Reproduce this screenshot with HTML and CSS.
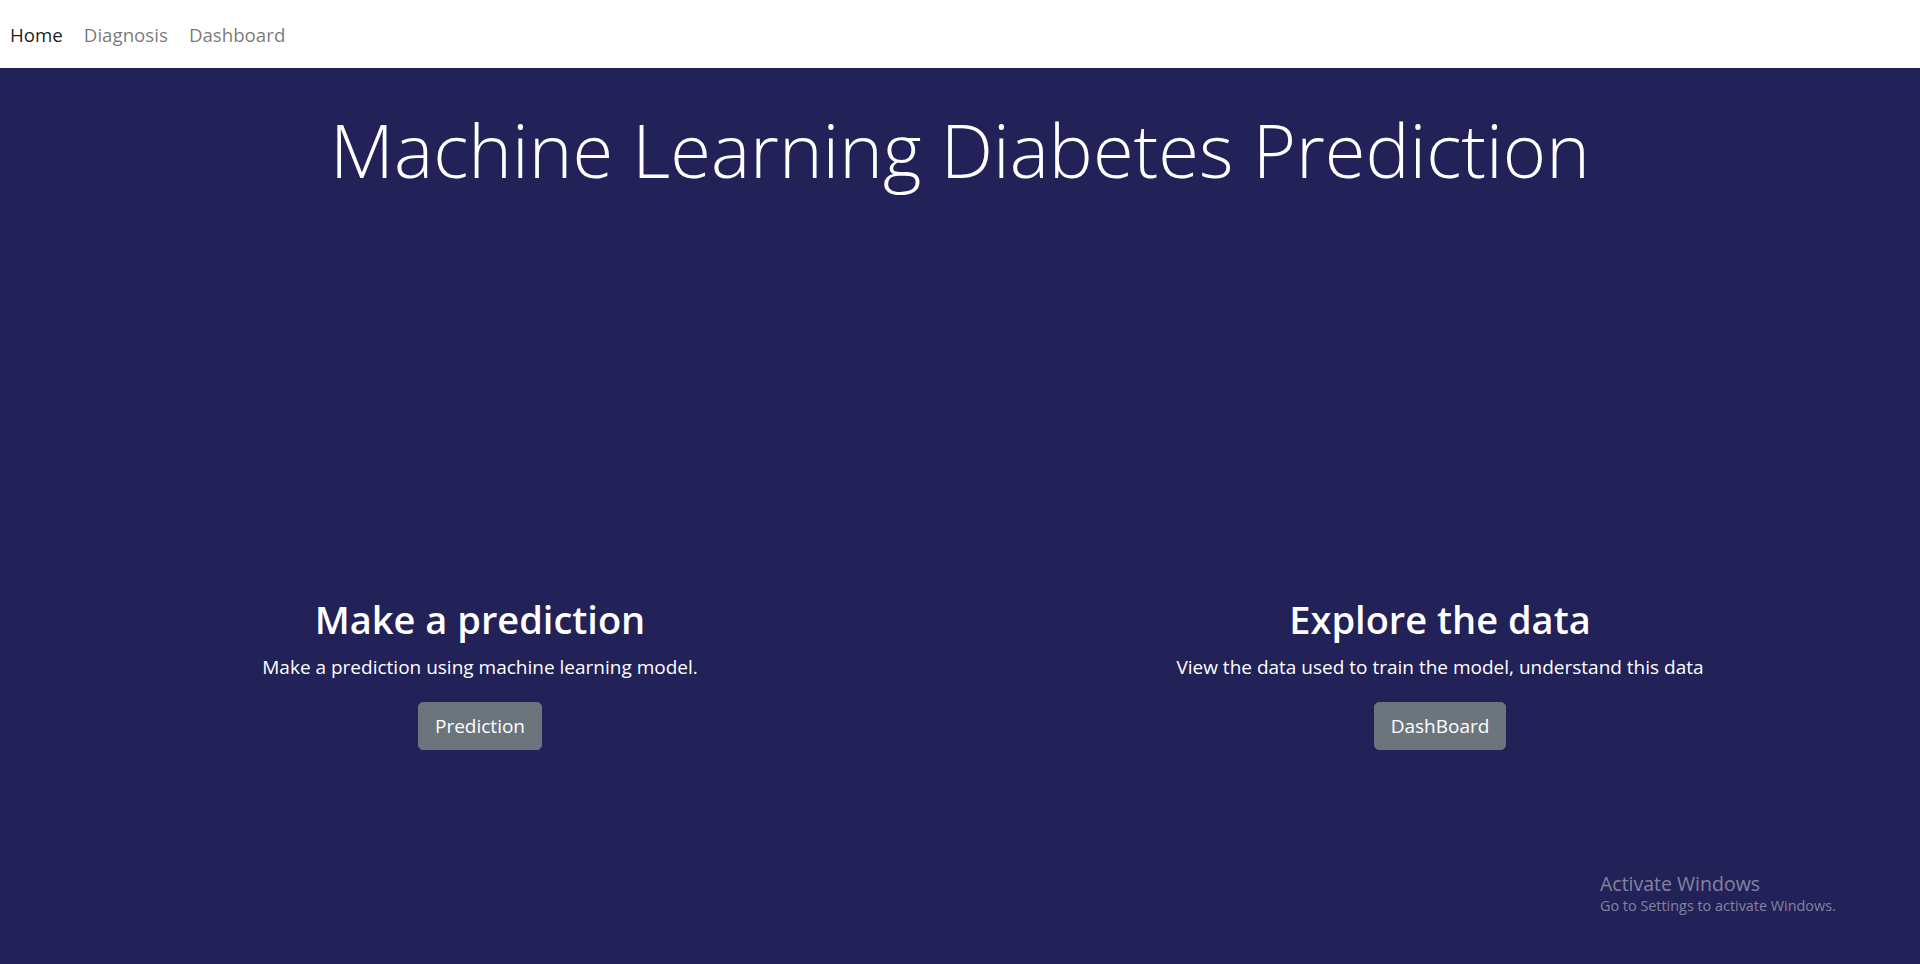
FILE: index.html
```html
<!DOCTYPE html>
<html lang="en">
<head>
<meta charset="utf-8">
<title>Machine Learning Diabetes Prediction</title>
<link rel="stylesheet" href="styles.css">
</head>
<body>
<nav class="navbar">
  <a class="nav-link active" href="#">Home</a>
  <a class="nav-link" href="#">Diagnosis</a>
  <a class="nav-link" href="#">Dashboard</a>
</nav>
<main class="hero">
  <h1 class="display-title">Machine Learning Diabetes Prediction</h1>
  <div class="cards">
    <section class="card">
      <h2 class="card-title">Make a prediction</h2>
      <p class="card-text">Make a prediction using machine learning model.</p>
      <a class="btn" href="#">Prediction</a>
    </section>
    <section class="card">
      <h2 class="card-title">Explore the data</h2>
      <p class="card-text">View the data used to train the model, understand this data</p>
      <a class="btn" href="#">DashBoard</a>
    </section>
  </div>
</main>
<div class="watermark">
  <div class="wm-title">Activate Windows</div>
  <div class="wm-sub">Go to Settings to activate Windows.</div>
</div>
</body>
</html>
```
FILE: styles.css
```css
html, body {
  margin: 0;
  padding: 0;
  height: 100%;
}
body {
  font-family: "Open Sans", "Noto Sans", sans-serif;
  background: #222158;
  color: #fff;
  overflow: hidden;
}
.navbar {
  height: 68px;
  background: #fff;
  display: flex;
  align-items: center;
  padding-left: 10px;
  gap: 21px;
  box-sizing: border-box;
}
.nav-link {
  font-size: 18.7px;
  color: rgba(0, 0, 0, 0.55);
  text-decoration: none;
}
.nav-link.active {
  color: rgba(0, 0, 0, 0.9);
}
.hero {
  text-align: center;
}
.display-title {
  margin: 34px 0 0;
  font-size: 74px;
  font-weight: 300;
  line-height: 96px;
}
.cards {
  display: flex;
  margin-top: 397px;
}
.card {
  flex: 1 1 0;
  display: flex;
  flex-direction: column;
  align-items: center;
}
.card-title {
  margin: 0;
  font-size: 38px;
  font-weight: 600;
  line-height: 48px;
}
.card-text {
  margin: 9px 0 20px;
  font-size: 19px;
  line-height: 30px;
}
.btn {
  display: inline-block;
  box-sizing: border-box;
  height: 48px;
  padding: 8px 16px;
  font-size: 19px;
  line-height: 30px;
  color: #fff;
  background: #6c757d;
  border: 1px solid #6c757d;
  border-radius: 5px;
  text-decoration: none;
}
.watermark {
  position: absolute;
  left: 1600px;
  top: 872px;
  color: rgba(255, 255, 255, 0.45);
}
.wm-title {
  font-size: 19.5px;
  line-height: 24px;
}
.wm-sub {
  font-size: 14.4px;
  line-height: 20px;
}
```
